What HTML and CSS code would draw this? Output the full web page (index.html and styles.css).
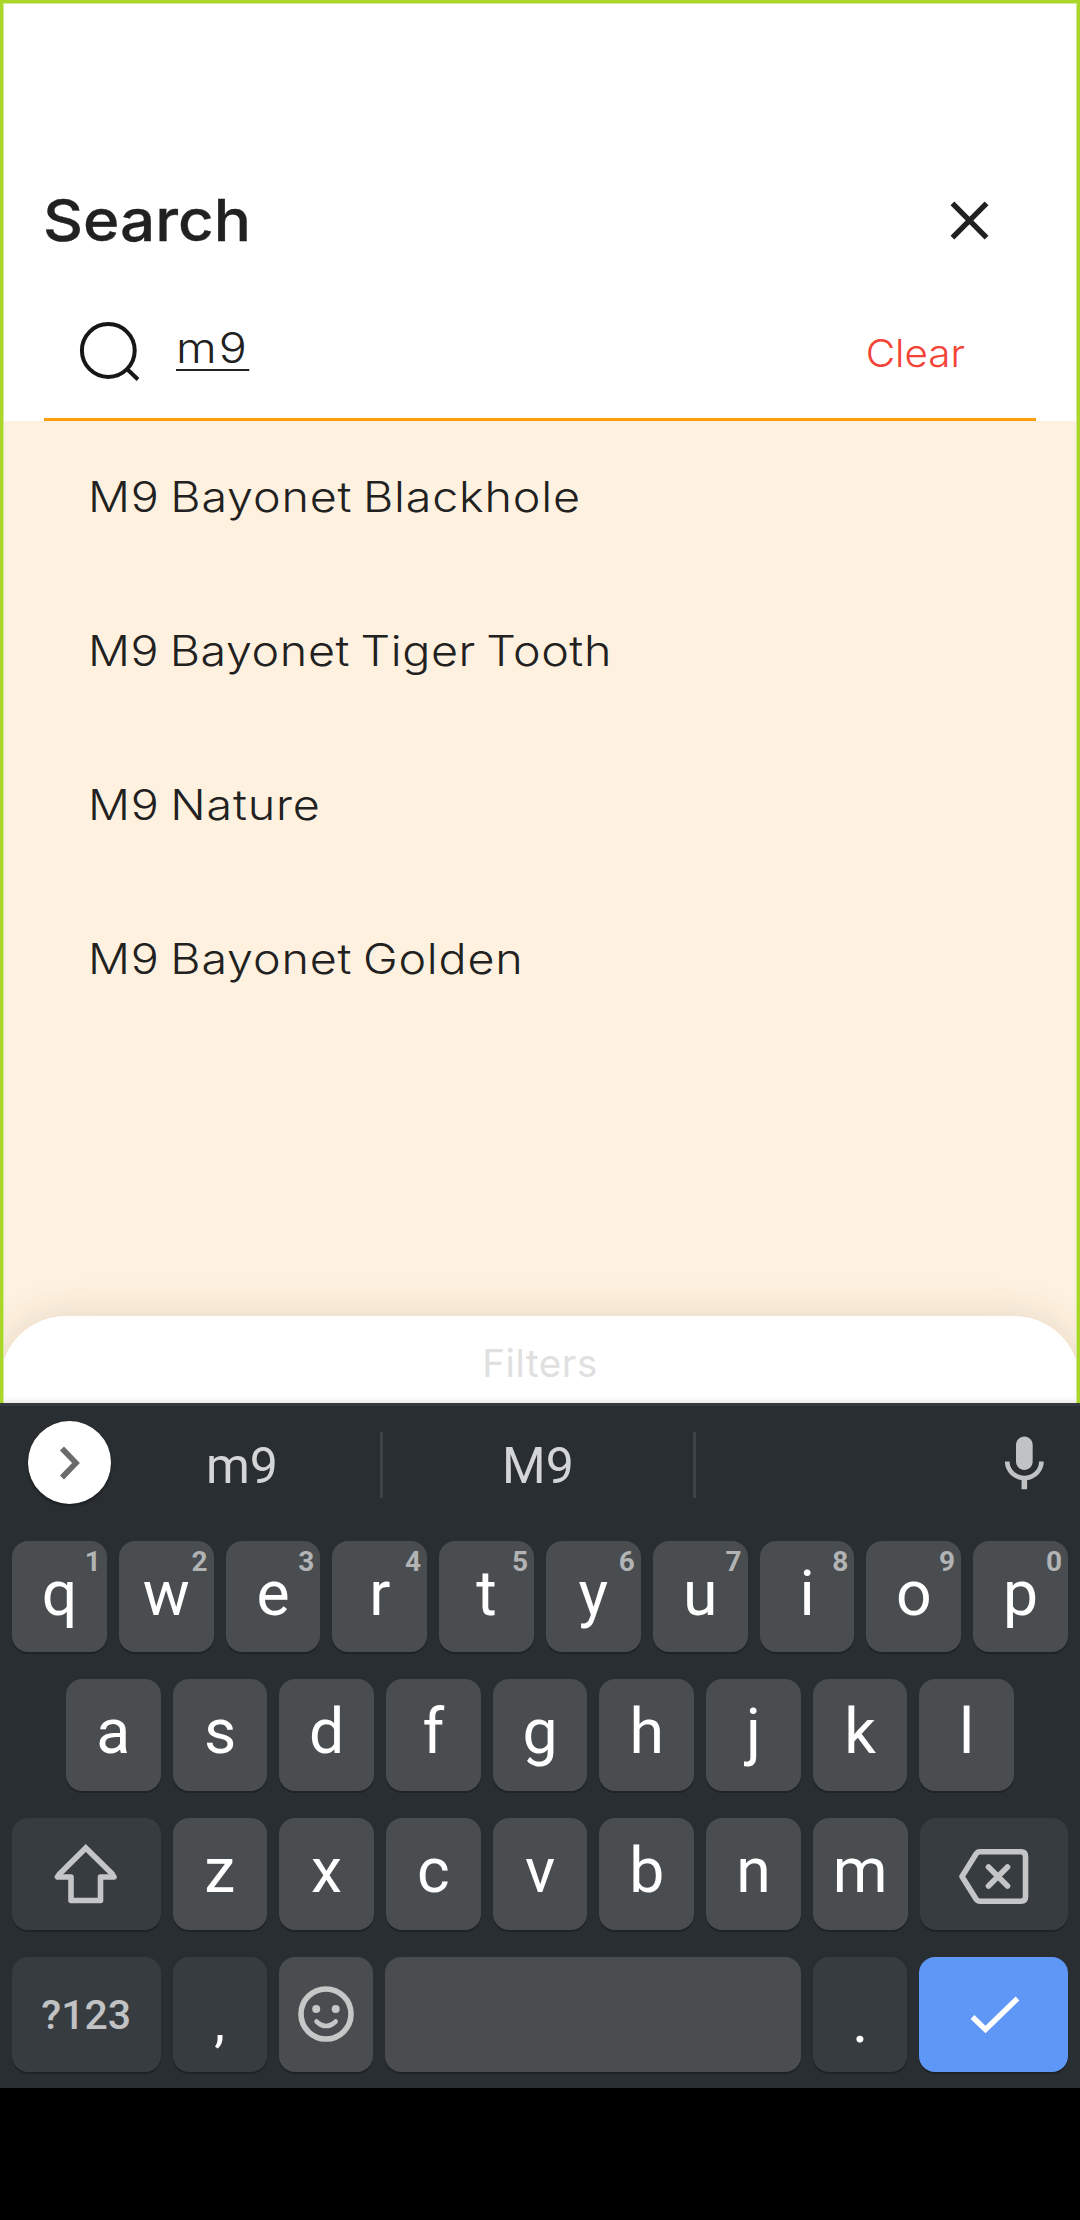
FILE: index.html
```html
<!DOCTYPE html>
<html lang="en">
<head>
<meta charset="utf-8">
<title>Search</title>
<link rel="stylesheet" href="styles.css">
</head>
<body>
<div class="screen">
  <main class="app">
    <header class="header">
      <h1 class="title">Search</h1>
      <svg class="close" viewBox="0 0 24 24"><path fill="#212121" d="M19 6.41L17.59 5 12 10.59 6.41 5 5 6.41 10.59 12 5 17.59 6.41 19 12 13.41 17.59 19 19 17.59 13.41 12z"/></svg>
    </header>
    <div class="searchbar">
      <svg class="magnifier" viewBox="0 0 64 64" fill="none" stroke="#171717" stroke-width="4"><circle cx="30.3" cy="30.5" r="26.4"/><path d="M49 49l11 10.500"/></svg>
      <span class="query"><span class="light query-text">m9</span></span>
      <span class="light clear">Clear</span>
    </div>
    <ul class="results">
      <li><span class="light">M9 Bayonet Blackhole</span></li>
      <li><span class="light snug">M9 Bayonet Tiger Tooth</span></li>
      <li><span class="light">M9 Nature</span></li>
      <li><span class="light">M9 Bayonet Golden</span></li>
    </ul>
    <div class="sheet"><div class="filters">Filters</div></div>
  </main>

  <section class="keyboard">
    <div class="suggestions">
      <span class="expand"><svg viewBox="0 0 83 83" width="83" height="83" fill="none" stroke="#6b6b6b" stroke-width="5.600"><path d="M34 27.500l14 14.500-14 14.500"/></svg></span>
      <span class="word first">m9</span>
      <i class="divider"></i>
      <span class="word">M9</span>
      <i class="divider"></i>
      <svg class="mic" viewBox="0 0 24 24"><path fill="#c0c2c4" d="M12 14c1.660 0 2.990-1.340 2.990-3L15 5c0-1.660-1.340-3-3-3S9 3.340 9 5v6c0 1.660 1.340 3 3 3zm5.300-3c0 3-2.540 5.100-5.300 5.100S6.700 14 6.700 11H5c0 3.410 2.720 6.230 6 6.720V21h2v-3.280c3.280-.480 6-3.300 6-6.720h-1.700z"/></svg>
    </div>
    <div class="row top">
      <span class="key">q<sup>1</sup></span><span class="key">w<sup>2</sup></span><span class="key">e<sup>3</sup></span><span class="key">r<sup>4</sup></span><span class="key">t<sup>5</sup></span><span class="key">y<sup>6</sup></span><span class="key">u<sup>7</sup></span><span class="key">i<sup>8</sup></span><span class="key">o<sup>9</sup></span><span class="key">p<sup>0</sup></span>
    </div>
    <div class="row inset">
      <span class="key">a</span><span class="key">s</span><span class="key">d</span><span class="key">f</span><span class="key">g</span><span class="key">h</span><span class="key">j</span><span class="key">k</span><span class="key">l</span>
    </div>
    <div class="row">
      <span class="key wide fn"><svg width="148" height="112" viewBox="0 0 148 112" fill="none" stroke="#c3c5c7" stroke-width="5.600" stroke-linejoin="round"><path stroke-linejoin="miter" d="M47 56.500L73.800 30l27 26.500"/><path d="M48 55.500l-2.500 3.500H59v23.500h29.500V59H102l-2.500-3.500"/></svg></span>
      <span class="key">z</span><span class="key">x</span><span class="key">c</span><span class="key">v</span><span class="key">b</span><span class="key">n</span><span class="key">m</span>
      <span class="key wide fn"><svg width="148" height="112" viewBox="0 0 148 112" fill="none" stroke="#c3c5c7" stroke-width="5.600" stroke-linejoin="round" stroke-linecap="round"><path d="M42 58.500L56 36q1.500-2.200 4-2.200h41q4.500 0 4.500 4.500v40.400q0 4.500-4.500 4.500H60q-2.500 0-4-2.200z"/><path d="M68.500 49l19 19M87.500 49l-19 19"/></svg></span>
    </div>
    <div class="row last">
      <span class="key wide fn sym">?123</span>
      <span class="key fn punct comma">,</span>
      <span class="key"><svg width="94" height="115" viewBox="0 0 94 115" fill="none" stroke="#c6c8c8" stroke-linecap="round"><circle cx="47" cy="57" r="25" stroke-width="5.600"/><circle cx="37.200" cy="52" r="4" fill="#c6c8c8" stroke="none"/><circle cx="56.700" cy="52" r="4" fill="#c6c8c8" stroke="none"/><path stroke-width="4.500" d="M37.500 64.500Q47 73.500 56.700 64.500"/></svg></span>
      <span class="key space"></span>
      <span class="key fn punct">.</span>
      <span class="key wide enter"><svg width="148" height="115" viewBox="0 0 148 115" fill="none" stroke="#fff" stroke-width="5.400"><path d="M52.500 60L65.500 72.500 97.500 41.500"/></svg></span>
    </div>
  </section>
</div>
</body>
</html>
```
FILE: styles.css
```css
* { box-sizing: border-box; }
body { margin: 0; background: #000; }

.screen {
  width: 1080px;
  height: 2220px;
  display: flex;
  flex-direction: column;
  background: #000;
}

.app {
  position: relative;
  height: 1403px;
  overflow: hidden;
  display: flex;
  flex-direction: column;
  background: #fff;
  color: #212121;
  font-family: Inter, "Noto Sans", sans-serif;
}
/* lime outline sits over the page edge and the filter sheet */
.app::after {
  content: "";
  position: absolute;
  inset: 0;
  border: 3px solid #aad52b;
  border-bottom: 0;
  box-shadow: inset 0 1px 0 #d3ea90, inset 1px 0 0 #d3ea90, inset -1px 0 0 #d3ea90, inset 0 -5px 6px -3px rgba(0, 0, 0, .1);
}

.header {
  height: 284px;
  padding: 156px 78px 0 43px;
  display: flex;
  justify-content: space-between;
  align-items: center;
}
.title {
  margin: 0;
  font-size: 58px;
  line-height: 72px;
  font-weight: 500;
  -webkit-text-stroke: 0.3px #212121;
  transform: scaleX(1.068);
  transform-origin: left;
}
.close { width: 65px; height: 65px; }

.searchbar {
  height: 137px;
  margin: 0 44px;
  padding: 0 73px 0 34px;
  display: flex;
  align-items: center;
  border-bottom: 3px solid #ff9d0a;
}
.magnifier { width: 64px; height: 64px; margin-top: 2px; }
/* light text is set slightly expanded */
.light {
  display: inline-block;
  font-weight: 300;
  font-size: 42px;
  line-height: 56px;
  letter-spacing: .75px;
  word-spacing: -3px;
  white-space: nowrap;
  transform: scaleX(1.11);
  transform-origin: left;
}
.snug { letter-spacing: .55px; }
.query { flex: 1; padding: 0 0 6px 34px; }
.query-text {
  height: 46px;
  line-height: 46px;
  letter-spacing: 1.8px;
  border-bottom: 2.5px solid #212121;
}
.clear {
  margin-top: 3px;
  font-size: 38.500px;
  letter-spacing: 0;
  color: #f44336;
  transform: scaleX(1.05);
  transform-origin: center;
}

.results {
  flex: 1;
  margin: 0;
  padding: 0 0 0 88px;
  list-style: none;
  background: #fff1df;
}
.results li { height: 154px; padding-bottom: 2px; display: flex; align-items: center; }

.sheet { height: 87px; background: #fff1df; }
.filters {
  height: 87px;
  border-radius: 66px 66px 0 0;
  background: #fff;
  box-shadow: 0 0 40px rgba(60, 60, 30, .14);
  color: #e0e0e0;
  font-size: 38.500px;
  line-height: 94px;
  letter-spacing: .6px;
  text-align: center;
}

.keyboard {
  height: 685px;
  padding: 0 12px;
  display: flex;
  flex-direction: column;
  gap: 27px;
  border-top: 3px solid #343a3e;
  background: #292e32;
  color: #fff;
  font-family: Roboto, sans-serif;
}
.suggestions {
  height: 108px;
  padding: 0 10px 0 16px;
  display: flex;
  align-items: center;
}
.expand {
  width: 83px;
  height: 83px;
  margin-top: 5px;
  border-radius: 50%;
  background: #fff;
  box-shadow: 0 2px 3px rgba(0, 0, 0, .35);
}
.word { width: 310px; text-align: center; font-size: 50px; line-height: 60px; color: #d3d5d7; padding-top: 11px; }
.word.first { width: 269px; padding-right: 7px; }
.divider { width: 3px; height: 66px; margin-top: 10px; background: #3f4347; }
.mic { width: 66.700px; height: 66.700px; margin: 9px 0 0 auto; }

.row { flex: none; display: flex; gap: 12px; height: 112px; }
.row.top { height: 111px; }
.row.inset { padding: 0 54px; }
.row.last { height: 115px; }
.key {
  position: relative;
  flex: 1 1 0;
  min-width: 0;
  display: flex;
  justify-content: center;
  border-radius: 16px;
  background: #494d4f;
  box-shadow: 0 2px 0 #1f2326;
  font-size: 62.500px;
  line-height: 105px;
}
.key sup {
  position: absolute;
  top: 5px;
  right: 6px;
  font-size: 28px;
  line-height: 32px;
  font-weight: 700;
  color: #b1b3b4;
}
.fn { background: #373c40; }
.wide { flex: 0 0 148.500px; }
.space { flex: 0 0 416px; }
.enter { background: #5e97f6; }
.sym { font-size: 41px; line-height: 117px; font-weight: 500; color: #c0c2c4; }
.punct { line-height: 127px; }
.comma { font-size: 54px; line-height: 132px; }
```
